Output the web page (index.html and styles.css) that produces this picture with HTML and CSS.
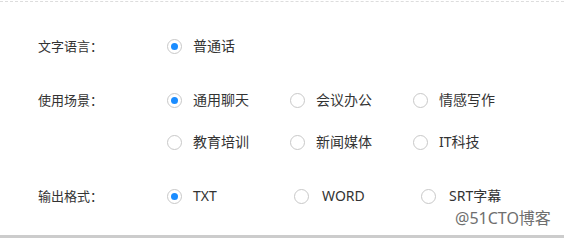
FILE: index.html
```html
<!DOCTYPE html>
<html lang="zh-CN">
<head>
    <meta charset="UTF-8">
    <title>转写设置</title>
    <link rel="stylesheet" href="styles.css">
</head>
<body>

    <div class="panel">
        <div class="group">
            <div class="group-label">文字语言：</div>
            <div class="options">
                <div class="option-row">
                    <label class="option"><span class="radio checked"></span>普通话</label>
                </div>
            </div>
        </div>

        <div class="group">
            <div class="group-label">使用场景：</div>
            <div class="options">
                <div class="option-row">
                    <label class="option"><span class="radio checked"></span>通用聊天</label>
                    <label class="option"><span class="radio"></span>会议办公</label>
                    <label class="option"><span class="radio"></span>情感写作</label>
                </div>
                <div class="option-row">
                    <label class="option"><span class="radio"></span>教育培训</label>
                    <label class="option"><span class="radio"></span>新闻媒体</label>
                    <label class="option"><span class="radio"></span>IT科技</label>
                </div>
            </div>
        </div>

        <div class="group">
            <div class="group-label">输出格式：</div>
            <div class="options">
                <div class="option-row format-row">
                    <label class="option"><span class="radio checked"></span>TXT</label>
                    <label class="option"><span class="radio"></span>WORD</label>
                    <label class="option"><span class="radio"></span>SRT字幕</label>
                </div>
            </div>
        </div>

        <div class="watermark">@51CTO博客</div>
    </div>

</body>
</html>
```

FILE: styles.css
```css
/* Reset */
* {
    margin: 0;
    padding: 0;
    box-sizing: border-box;
}

body {
    width: 564px;
    height: 238px;
    background: #fff;
    color: #333;
    font-family: "Noto Sans", "Noto Sans CJK SC", sans-serif;
    font-size: 13px;
    overflow: hidden;
}

.panel {
    position: relative;
    height: 237px;
    margin-top: 1px;
    padding-top: 32px;
    border-top: 1px dashed #ddd;
    border-bottom: 3px solid #ccc;
}

.group {
    display: flex;
    margin-bottom: 30px;
}

.group-label {
    width: 167px;
    padding-left: 38px;
    line-height: 24px;
}

.options {
    display: flex;
    flex-direction: column;
    gap: 18px;
}

.option-row {
    display: flex;
}

.option {
    display: flex;
    align-items: center;
    width: 123px;
    height: 24px;
    line-height: 24px;
    font-size: 14px;
}

.format-row .option {
    width: 127px;
}

.format-row .option:last-child {
    width: auto;
}

.radio {
    width: 15px;
    height: 15px;
    margin-right: 11px;
    border: 1px solid #c8c8c8;
    border-radius: 50%;
    background: #fff;
    position: relative;
    flex-shrink: 0;
}

.format-row .option + .option .radio {
    margin-right: 13px;
}

.radio.checked::after {
    content: "";
    position: absolute;
    left: 3px;
    top: 3px;
    width: 7px;
    height: 7px;
    border-radius: 50%;
    background: #1a8cff;
}

.watermark {
    position: absolute;
    left: 455px;
    top: 204px;
    font-size: 16px;
    color: #6f6f6f;
    line-height: 24px;
}
```
